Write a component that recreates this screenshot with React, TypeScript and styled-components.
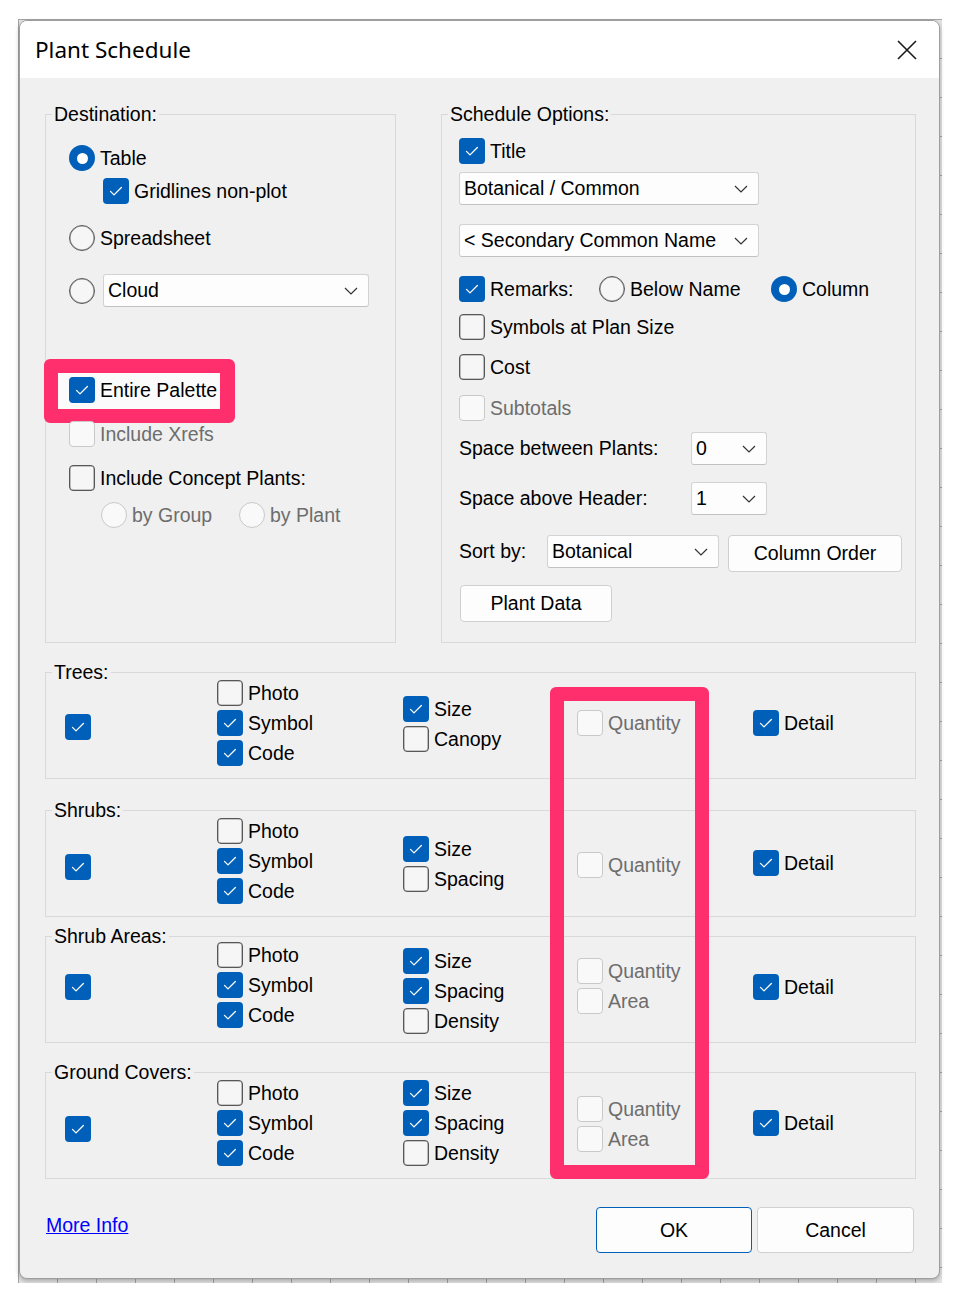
import styled, { createGlobalStyle } from 'styled-components';

const ACCENT = '#005fb8';
const PINK = '#ff2f6e';
const DIM = '#6d6d6d';

const GlobalStyle = createGlobalStyle`
  html, body { margin: 0; padding: 0; background: #ffffff; }
  body {
    font-family: "Liberation Sans", Arial, sans-serif;
    font-size: 19.5px;
    color: #000;
  }
`;

const Canvas = styled.div`
  width: 921px;
  margin: 19px 0 0 18px;
  padding: 1px 2px 4px 1px;
  background-color: #e2e2e2;
  background-image: linear-gradient(to right, #a4a4a4 1px, transparent 1px),
    linear-gradient(to bottom, #a4a4a4 1px, transparent 1px);
  background-size: 39px 39px;
`;

const Dialog = styled.div`
  width: 921px;
  box-sizing: border-box;
  border: 1px solid #9e9e9e;
  border-radius: 8px;
  overflow: hidden;
  background: #f0f0f0;
  box-shadow: 0 2px 4px rgba(0, 0, 0, 0.25);
`;

const TitleBar = styled.div`
  height: 57px;
  background: #ffffff;
  display: flex;
  align-items: center;
  justify-content: space-between;
  padding: 0 22px 0 15px;
`;

const Title = styled.h1`
  margin: 0;
  font-family: "Segoe UI", "Noto Sans", sans-serif;
  font-weight: 400;
  font-size: 22.5px;
`;

const Body = styled.div`
  padding: 36px 23px 25px 25px;
`;

const TopRow = styled.div`
  display: flex;
  gap: 45px;
`;

const GroupBox = styled.section<{ $w?: number; $h?: number; $mt?: number }>`
  box-sizing: border-box;
  width: ${p => (p.$w ? `${p.$w}px` : 'auto')};
  height: ${p => (p.$h ? `${p.$h}px` : 'auto')};
  margin-top: ${p => p.$mt ?? 0}px;
  border: 1px solid #d9d9d9;
  display: flex;
  flex-direction: column;
`;

const Legend = styled.div`
  align-self: flex-start;
  margin: -12px 0 0 6px;
  padding: 0 2px;
  height: 22px;
  line-height: 22px;
  background: #f0f0f0;
  white-space: nowrap;
`;

const Pane = styled.div<{ $pad: number }>`
  display: flex;
  flex-direction: column;
  align-items: flex-start;
  padding-left: ${p => p.$pad}px;
`;

const Row = styled.div<{ $mt?: number; $h?: number; $indent?: number; $top?: boolean }>`
  position: relative;
  display: flex;
  align-items: ${p => (p.$top ? 'flex-start' : 'center')};
  height: ${p => p.$h ?? 30}px;
  margin-top: ${p => p.$mt ?? 0}px;
  margin-left: ${p => p.$indent ?? 0}px;
`;

const OptionLabel = styled.label<{ $w?: number; $dim?: boolean }>`
  position: relative;
  z-index: 1;
  display: inline-flex;
  align-items: center;
  gap: 5px;
  height: 30px;
  line-height: 22px;
  white-space: nowrap;
  width: ${p => (p.$w ? `${p.$w}px` : 'auto')};
  color: ${p => (p.$dim ? DIM : '#000')};
`;

const Mark = styled.span<{ $round?: boolean; $on?: boolean; $off?: boolean }>`
  flex: none;
  width: 26px;
  height: 26px;
  box-sizing: border-box;
  border-radius: ${p => (p.$round ? '50%' : '4px')};
  display: flex;
  align-items: center;
  justify-content: center;
  background: ${p => (p.$on ? ACCENT : p.$off ? '#f9f9f9' : '#f6f6f6')};
  border: ${p => (p.$on ? 'none' : p.$off ? '1px solid #c9c9c9' : '1px solid #575757')};
  box-shadow: ${p => (p.$on || p.$off ? 'none' : 'inset 0 0 0 0.6px rgba(87, 87, 87, 0.6)')};
`;

const Dot = styled.span`
  width: 11px;
  height: 11px;
  border-radius: 50%;
  background: #ffffff;
`;

const Combo = styled.div<{ $w: number; $mt?: number; $ml?: number }>`
  box-sizing: border-box;
  width: ${p => p.$w}px;
  height: 33px;
  margin-top: ${p => p.$mt ?? 0}px;
  margin-left: ${p => p.$ml ?? 0}px;
  padding: 0 10px 0 4px;
  display: flex;
  align-items: center;
  justify-content: space-between;
  background: #fdfdfd;
  border: 1px solid #d3d3d3;
  border-bottom-color: #c2c2c2;
  border-radius: 3px;
  white-space: nowrap;
`;

const FieldLabel = styled.span<{ $w: number }>`
  width: ${p => p.$w}px;
  height: 33px;
  line-height: 33px;
  white-space: nowrap;
`;

const Button = styled.button<{ $w: number; $h: number; $mt?: number; $ml?: number; $primary?: boolean }>`
  box-sizing: border-box;
  width: ${p => p.$w}px;
  height: ${p => p.$h}px;
  margin: ${p => p.$mt ?? 0}px 0 0 ${p => p.$ml ?? 0}px;
  padding: 0;
  font: inherit;
  color: #000;
  background: #fdfdfd;
  border: 1px solid ${p => (p.$primary ? ACCENT : '#d0d0d0')};
  border-radius: 4px;
`;

const PaletteMark = styled.div`
  position: absolute;
  left: -25px;
  top: -16px;
  width: 191px;
  height: 64px;
  box-sizing: border-box;
  border: 14px solid ${PINK};
  border-right-width: 15px;
  border-radius: 6px;
  background: #fbfbfb;
  z-index: 0;
`;

const Categories = styled.div`
  position: relative;
  margin-top: 29px;
`;

const QuantityMark = styled.div`
  position: absolute;
  left: 505px;
  top: 15px;
  width: 159px;
  height: 492px;
  box-sizing: border-box;
  border: 14px solid ${PINK};
  border-radius: 6px;
  pointer-events: none;
`;

const CatGrid = styled.div`
  display: grid;
  grid-template-columns: 152px 186px 174px 176px 1fr;
  grid-template-rows: 82px;
  align-items: center;
  padding: 0 0 13px 19px;
`;

const CatCol = styled.div<{ $dy: number }>`
  display: flex;
  flex-direction: column;
  margin-top: ${p => p.$dy * 2}px;
`;

const Footer = styled.div`
  display: flex;
  align-items: center;
  justify-content: space-between;
  margin-top: 28px;
  padding: 0 2px 0 1px;
`;

const Link = styled.a`
  color: #0000ff;
  text-decoration: underline;
  margin-bottom: 9px;
  cursor: pointer;
`;

const Actions = styled.div`
  display: flex;
  gap: 5px;
`;

const Check = () => (
  <svg width="26" height="26" viewBox="0 0 26 26">
    <path d="M7.5 13.4 L11 16.9 L18.4 9.5" fill="none" stroke="#fff" strokeWidth="1.3" strokeLinecap="round" strokeLinejoin="round" />
  </svg>
);

const Chevron = () => (
  <svg width="14" height="8" viewBox="0 0 14 8">
    <path d="M1 1 L7 7 L13 1" fill="none" stroke="#333" strokeWidth="1.2" />
  </svg>
);

const CloseIcon = () => (
  <svg width="20" height="20" viewBox="0 0 20 20">
    <path d="M1 1 L19 19 M19 1 L1 19" stroke="#1a1a1a" strokeWidth="1.6" />
  </svg>
);

interface ChoiceProps {
  label?: string;
  radio?: boolean;
  checked?: boolean;
  disabled?: boolean;
  width?: number;
}

const Choice: React.FC<ChoiceProps> = ({ label, radio, checked, disabled, width }) => (
  <OptionLabel $w={width} $dim={disabled}>
    <Mark $round={radio} $on={checked} $off={disabled}>
      {checked && (radio ? <Dot /> : <Check />)}
    </Mark>
    {label}
  </OptionLabel>
);

type Opt = { label: string; checked?: boolean; disabled?: boolean };
type Category = { name: string; mt: number; main: number; cols: { dy: number; items: Opt[] }[] };

const photoSymbolCode: Opt[] = [
  { label: 'Photo' },
  { label: 'Symbol', checked: true },
  { label: 'Code', checked: true },
];

const categories: Category[] = [
  {
    name: 'Trees:',
    mt: 0,
    main: 3,
    cols: [
      { dy: -1, items: photoSymbolCode },
      { dy: 0, items: [{ label: 'Size', checked: true }, { label: 'Canopy' }] },
      { dy: -1, items: [{ label: 'Quantity', disabled: true }] },
      { dy: -1, items: [{ label: 'Detail', checked: true }] },
    ],
  },
  {
    name: 'Shrubs:',
    mt: 31,
    main: 5,
    cols: [
      { dy: -1, items: photoSymbolCode },
      { dy: 2, items: [{ label: 'Size', checked: true }, { label: 'Spacing' }] },
      { dy: 3, items: [{ label: 'Quantity', disabled: true }] },
      { dy: 1, items: [{ label: 'Detail', checked: true }] },
    ],
  },
  {
    name: 'Shrub Areas:',
    mt: 19,
    main: -1,
    cols: [
      { dy: -3, items: photoSymbolCode },
      { dy: 3, items: [{ label: 'Size', checked: true }, { label: 'Spacing', checked: true }, { label: 'Density' }] },
      { dy: -2, items: [{ label: 'Quantity', disabled: true }, { label: 'Area', disabled: true }] },
      { dy: -1, items: [{ label: 'Detail', checked: true }] },
    ],
  },
  {
    name: 'Ground Covers:',
    mt: 29,
    main: 5,
    cols: [
      { dy: -1, items: photoSymbolCode },
      { dy: -1, items: [{ label: 'Size', checked: true }, { label: 'Spacing', checked: true }, { label: 'Density' }] },
      { dy: 0, items: [{ label: 'Quantity', disabled: true }, { label: 'Area', disabled: true }] },
      { dy: -1, items: [{ label: 'Detail', checked: true }] },
    ],
  },
];

export default function App() {
  return (
    <>
      <GlobalStyle />
      <Canvas>
        <Dialog>
          <TitleBar>
            <Title>Plant Schedule</Title>
            <CloseIcon />
          </TitleBar>
          <Body>
            <TopRow>
              <GroupBox $w={351} $h={529}>
                <Legend>Destination:</Legend>
                <Pane $pad={23}>
                  <Row $mt={18}>
                    <Choice radio checked label="Table" />
                  </Row>
                  <Row $mt={3} $indent={34}>
                    <Choice checked label="Gridlines non-plot" />
                  </Row>
                  <Row $mt={17}>
                    <Choice radio label="Spreadsheet" />
                  </Row>
                  <Row $mt={21} $h={33}>
                    <Choice radio />
                    <Combo $w={266} $ml={8}>
                      Cloud
                      <Chevron />
                    </Combo>
                  </Row>
                  <Row $mt={68}>
                    <PaletteMark />
                    <Choice checked label="Entire Palette" />
                  </Row>
                  <Row $mt={14}>
                    <Choice disabled label="Include Xrefs" />
                  </Row>
                  <Row $mt={14}>
                    <Choice label="Include Concept Plants:" />
                  </Row>
                  <Row $mt={7} $indent={32}>
                    <Choice radio disabled label="by Group" width={138} />
                    <Choice radio disabled label="by Plant" />
                  </Row>
                </Pane>
              </GroupBox>

              <GroupBox $w={475} $h={529}>
                <Legend>Schedule Options:</Legend>
                <Pane $pad={17}>
                  <Row $mt={11}>
                    <Choice checked label="Title" />
                  </Row>
                  <Combo $w={300} $mt={6}>
                    Botanical / Common
                    <Chevron />
                  </Combo>
                  <Combo $w={300} $mt={19}>
                    &lt; Secondary Common Name
                    <Chevron />
                  </Combo>
                  <Row $mt={17}>
                    <Choice checked label="Remarks:" width={140} />
                    <Choice radio label="Below Name" width={172} />
                    <Choice radio checked label="Column" />
                  </Row>
                  <Row $mt={8}>
                    <Choice label="Symbols at Plan Size" />
                  </Row>
                  <Row $mt={10}>
                    <Choice label="Cost" />
                  </Row>
                  <Row $mt={11}>
                    <Choice disabled label="Subtotals" />
                  </Row>
                  <Row $mt={9} $h={33}>
                    <FieldLabel $w={232}>Space between Plants:</FieldLabel>
                    <Combo $w={76}>
                      0
                      <Chevron />
                    </Combo>
                  </Row>
                  <Row $mt={17} $h={33}>
                    <FieldLabel $w={232}>Space above Header:</FieldLabel>
                    <Combo $w={76}>
                      1
                      <Chevron />
                    </Combo>
                  </Row>
                  <Row $mt={20} $h={37} $top>
                    <FieldLabel $w={88}>Sort by:</FieldLabel>
                    <Combo $w={172}>
                      Botanical
                      <Chevron />
                    </Combo>
                    <Button $w={174} $h={37} $ml={9}>Column Order</Button>
                  </Row>
                  <Button $w={152} $h={37} $mt={13} $ml={1}>Plant Data</Button>
                </Pane>
              </GroupBox>
            </TopRow>

            <Categories>
              {categories.map(cat => (
                <GroupBox key={cat.name} $mt={cat.mt}>
                  <Legend>{cat.name}</Legend>
                  <CatGrid>
                    <CatCol $dy={cat.main}>
                      <Choice checked />
                    </CatCol>
                    {cat.cols.map((col, i) => (
                      <CatCol key={i} $dy={col.dy}>
                        {col.items.map(item => (
                          <Choice key={item.label} label={item.label} checked={item.checked} disabled={item.disabled} />
                        ))}
                      </CatCol>
                    ))}
                  </CatGrid>
                </GroupBox>
              ))}
              <QuantityMark />
            </Categories>

            <Footer>
              <Link>More Info</Link>
              <Actions>
                <Button $w={156} $h={46} $primary>OK</Button>
                <Button $w={157} $h={46}>Cancel</Button>
              </Actions>
            </Footer>
          </Body>
        </Dialog>
      </Canvas>
    </>
  );
}
